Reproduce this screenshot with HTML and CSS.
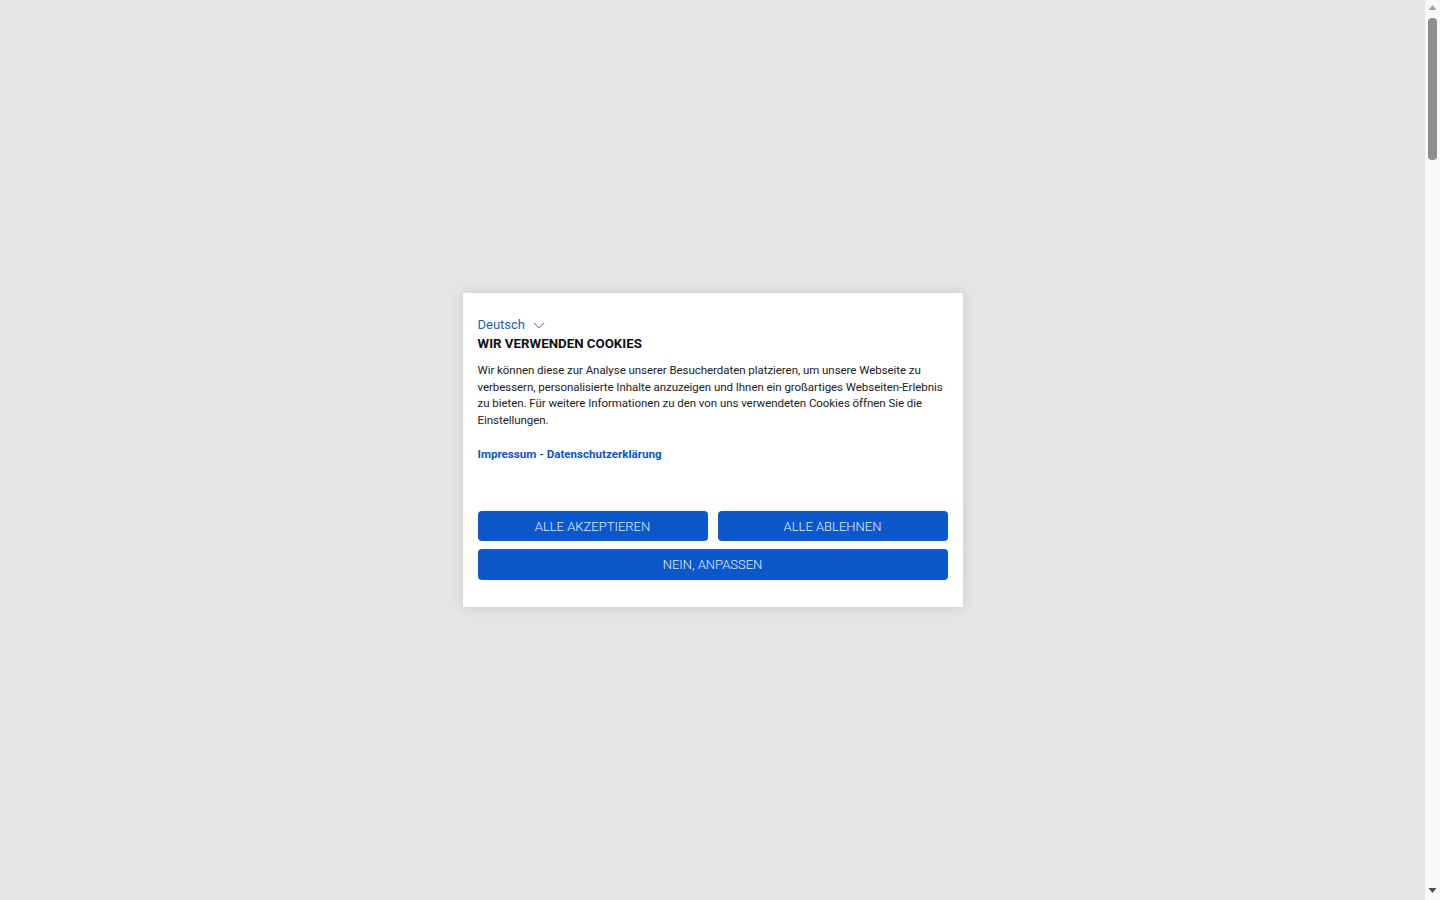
FILE: index.html
```html
<!DOCTYPE html>
<html lang="de">
<head>
<meta charset="utf-8">
<title>Cookies</title>
<link rel="stylesheet" href="styles.css">
</head>
<body>
<main class="stage">
  <div class="dialog" role="dialog" aria-label="Cookie-Einstellungen">
    <div class="lang">
      <span class="lang-label">Deutsch</span>
      <svg class="chev" width="12" height="7" viewBox="0 0 12 7" aria-hidden="true"><polyline points="0.8,0.8 6,5.8 11.2,0.8" fill="none" stroke="#6a8ccf" stroke-width="1.1"/></svg>
    </div>
    <h2 class="title">WIR VERWENDEN COOKIES</h2>
    <p class="text">Wir können diese zur Analyse unserer Besucherdaten platzieren, um unsere Webseite zu verbessern, personalisierte Inhalte anzuzeigen und Ihnen ein großartiges Webseiten-Erlebnis zu bieten. Für weitere Informationen zu den von uns verwendeten Cookies öffnen Sie die Einstellungen.</p>
    <p class="links"><a href="#" class="link">Impressum</a> - <a href="#" class="link">Datenschutzerklärung</a></p>
    <div class="actions">
      <div class="row">
        <button class="btn">ALLE AKZEPTIEREN</button>
        <button class="btn">ALLE ABLEHNEN</button>
      </div>
      <button class="btn wide">NEIN, ANPASSEN</button>
    </div>
  </div>
</main>
<aside class="scrollbar" aria-hidden="true">
  <div class="sb-arrow">
    <svg width="15" height="15" viewBox="0 0 15 15"><polygon points="3.5,10 7.5,5 11.5,10" fill="#a3a3a3"/></svg>
  </div>
  <div class="sb-track">
    <div class="sb-thumb"></div>
  </div>
  <div class="sb-arrow">
    <svg width="15" height="15" viewBox="0 0 15 15"><polygon points="3.5,3 11.5,3 7.5,8" fill="#505050"/></svg>
  </div>
</aside>
</body>
</html>
```
FILE: styles.css
```css
html, body {
  margin: 0;
  padding: 0;
  height: 100%;
  overflow: hidden;
}
body {
  display: flex;
  background: #e5e5e5;
  font-family: Roboto, "Liberation Sans", sans-serif;
}
.stage {
  flex: 1;
  display: flex;
  align-items: center;
  justify-content: center;
}
.dialog {
  width: 500px;
  box-sizing: border-box;
  background: #ffffff;
  padding: 22px 15px 27px;
  box-shadow: 0 0 12px rgba(0, 0, 0, 0.12);
}
.lang {
  display: flex;
  align-items: center;
  gap: 8px;
  height: 20px;
}
.lang-label {
  font-size: 13px;
  line-height: 20px;
  color: #1a5ec9;
}
.chev {
  display: block;
  margin-top: 1px;
}
.title {
  margin: 0;
  font-size: 13.3px;
  line-height: 18px;
  font-weight: 700;
  color: #111111;
}
.text {
  margin: 9px 0 0;
  font-size: 11.5px;
  line-height: 16.5px;
  letter-spacing: -0.05px;
  color: #222222;
}
.links {
  margin: 18px 0 0;
  font-size: 11.6px;
  line-height: 16px;
  font-weight: 700;
  color: #0b56c9;
}
.link {
  color: #0b56c9;
  text-decoration: none;
}
.actions {
  margin-top: 49px;
  display: flex;
  flex-direction: column;
  gap: 8px;
}
.row {
  display: flex;
  gap: 10px;
}
.btn {
  height: 30px;
  border: 0;
  border-radius: 4px;
  background: #0c57c9;
  color: #e3ecff;
  font-family: Roboto, "Liberation Sans", sans-serif;
  font-weight: 300;
  font-size: 13px;
  padding: 0;
  cursor: pointer;
}
.row .btn {
  flex: 1;
}
.btn.wide {
  width: 100%;
  height: 31px;
}
.scrollbar {
  width: 15px;
  flex: none;
  display: flex;
  flex-direction: column;
  background: #f8f8f8;
}
.sb-arrow {
  height: 15px;
  flex: none;
}
.sb-arrow svg {
  display: block;
}
.sb-track {
  flex: 1;
  padding: 3px 3px 0 3px;
}
.sb-thumb {
  height: 142px;
  border-radius: 4px;
  background: #8e8e8e;
}
```
